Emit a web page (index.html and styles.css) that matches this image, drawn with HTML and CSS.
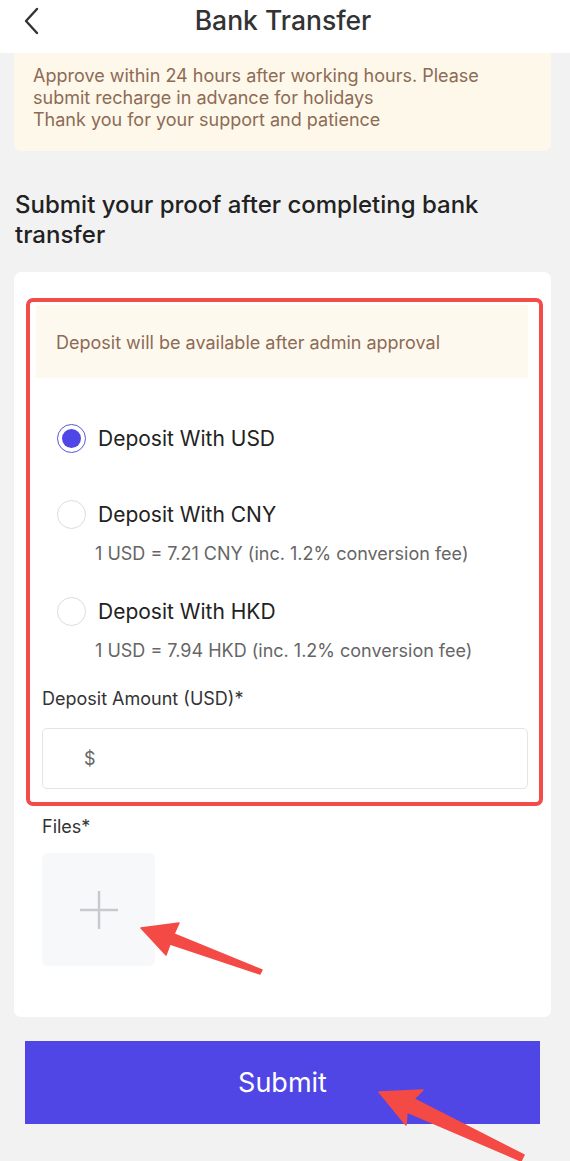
FILE: index.html
```html
<!DOCTYPE html>
<html lang="en">
<head>
<meta charset="utf-8">
<title>Bank Transfer</title>
<link rel="stylesheet" href="styles.css">
</head>
<body>
<div class="page">
  <header class="topbar">
    <button class="back" aria-label="Back">
      <svg width="20" height="28" viewBox="0 0 20 28"><path d="M13 2 L2 14 L13 26" fill="none" stroke="#333" stroke-width="2.4" stroke-linecap="round" stroke-linejoin="round"/></svg>
    </button>
    <h1 class="title">Bank Transfer</h1>
    <span></span>
  </header>

  <div class="banner">
    Approve within 24 hours after working hours. Please submit recharge in advance for holidays<br>
    Thank you for your support and patience
  </div>

  <h2 class="heading">Submit your proof after completing bank transfer</h2>

  <section class="card">
    <div class="highlight"></div>
    <div class="notice">Deposit will be available after admin approval</div>

    <div class="radios">
      <label class="radio-row first">
        <span class="radio checked"><span class="dot"></span></span>
        <span class="radio-label">Deposit With USD</span>
      </label>
      <label class="radio-row">
        <span class="radio"></span>
        <span class="radio-label">Deposit With CNY</span>
      </label>
      <div class="rate">1 USD = 7.21 CNY (inc. 1.2% conversion fee)</div>
      <label class="radio-row later">
        <span class="radio"></span>
        <span class="radio-label">Deposit With HKD</span>
      </label>
      <div class="rate">1 USD = 7.94 HKD (inc. 1.2% conversion fee)</div>
    </div>

    <div class="field-label amount-label">Deposit Amount (USD)*</div>
    <div class="input"><span class="currency">$</span></div>

    <div class="field-label files-label">Files*</div>
    <div class="upload">
      <svg width="40" height="40" viewBox="0 0 40 40"><path d="M20 1 V39 M1 20 H39" stroke="#c8c9cc" stroke-width="2.4" fill="none"/></svg>
    </div>
  </section>

  <button class="submit">Submit</button>

  <svg class="arrows" width="570" height="1161" viewBox="0 0 570 1161">
    <polygon points="141,928 179,923 174,934 262,970 260,974 170,944 166,955" fill="#f44a45" stroke="#f44a45" stroke-width="1.5" stroke-linejoin="round"/>
    <polygon points="379,1092 423,1090 414,1099 524,1155 521,1161 407,1112 406,1125" fill="#f44a45" stroke="#f44a45" stroke-width="1.5" stroke-linejoin="round"/>
  </svg>
</div>
</body>
</html>
```

FILE: styles.css
```css
* { box-sizing: border-box; }
html, body { margin: 0; padding: 0; }
body {
  background: #f2f2f2;
  font-family: Inter, "Noto Sans", sans-serif;
  color: #222;
}
.page {
  position: relative;
  width: 570px;
  min-height: 1161px;
  overflow: hidden;
}
.topbar {
  height: 53px;
  background: #fff;
  display: grid;
  grid-template-columns: 70px 1fr 70px;
  align-items: center;
}
.back {
  border: 0;
  background: none;
  padding: 0 0 0 24px;
  height: 40px;
  display: flex;
  align-items: center;
  margin-top: -12px;
}
.title {
  margin: 0 0 14px 0;
  text-align: center;
  font-size: 26.5px;
  font-weight: 500;
  color: #333;
  position: relative;
  left: -2px;
}
.banner {
  margin: 0 19px 0 14px;
  background: #fdf8ea;
  border-radius: 0 0 7px 7px;
  padding: 12px 19px 20px 19px;
  font-size: 18px;
  line-height: 22px;
  color: #8d6b55;
}
.heading {
  margin: 39px 19px 0 15px;
  font-size: 24px;
  line-height: 30px;
  font-weight: 500;
  color: #222;
}
.card {
  position: relative;
  margin: 22px 19px 0 14px;
  background: #fff;
  border-radius: 7px;
  padding: 33px 0 51px 0;
}
.highlight {
  position: absolute;
  left: 12px;
  top: 26px;
  width: 517px;
  height: 508px;
  border: 4px solid #f24b4a;
  border-radius: 7px;
  pointer-events: none;
}
.notice {
  margin: 0 23px 0 22px;
  height: 73px;
  background: #fef9ee;
  display: flex;
  align-items: center;
  padding-left: 20px;
  padding-top: 2px;
  font-size: 18px;
  color: #8d6b55;
}
.radios {
  display: flex;
  flex-direction: column;
  padding-left: 43px;
}
.radio-row {
  display: flex;
  align-items: center;
  gap: 12px;
  height: 30px;
  margin-top: 46px;
}
.radio-row.first { margin-top: 45px; }
.radio-row.later { margin-top: 31px; }
.radio {
  width: 29px;
  height: 29px;
  border-radius: 50%;
  border: 1px solid #dcdcdc;
  display: flex;
  align-items: center;
  justify-content: center;
  flex: none;
}
.radio.checked { border-color: #5a55d8; }
.dot {
  width: 19px;
  height: 19px;
  border-radius: 50%;
  background: #4f46e5;
}
.radio-label {
  font-size: 21px;
  color: #222;
}
.rate {
  margin-top: 14px;
  padding-left: 38px;
  font-size: 18px;
  line-height: 22px;
  color: #666;
}
.field-label {
  margin-left: 28px;
  font-size: 18px;
  line-height: 22px;
  color: #333;
}
.amount-label { margin-top: 26px; }
.input {
  margin: 18px 23px 0 28px;
  height: 61px;
  border: 1px solid #e4e4e4;
  border-radius: 5px;
  display: flex;
  align-items: center;
  padding-left: 41px;
}
.currency {
  font-size: 18px;
  color: #666;
}
.files-label { margin-top: 27px; }
.upload {
  margin: 15px 0 0 28px;
  width: 113px;
  height: 113px;
  background: #f7f8fa;
  border-radius: 6px;
  display: flex;
  align-items: center;
  justify-content: center;
}
.submit {
  display: block;
  margin: 24px 0 0 25px;
  width: 515px;
  height: 83px;
  border: 0;
  background: #4f46e5;
  color: #fff;
  font-family: Inter, "Noto Sans", sans-serif;
  font-size: 27px;
  font-weight: 400;
  padding: 0;
}
.arrows {
  position: absolute;
  left: 0;
  top: 0;
  pointer-events: none;
}
```
